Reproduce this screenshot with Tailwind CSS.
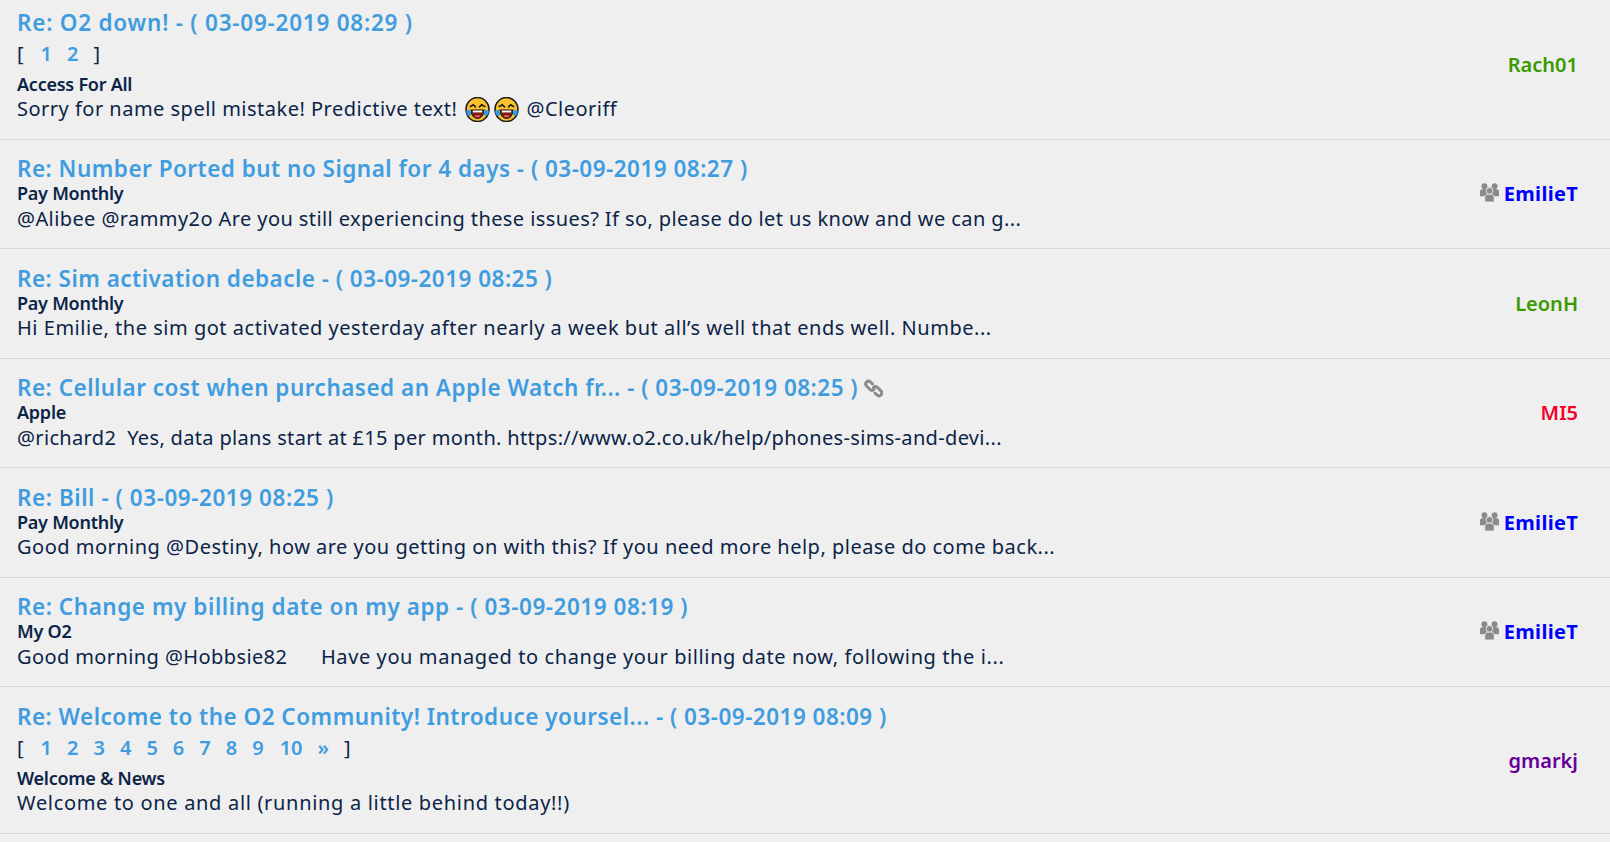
<!DOCTYPE html>
<html lang="en">
<head>
  <meta charset="UTF-8" />
  <title>Recent posts</title>
  <script src="https://cdn.jsdelivr.net/npm/@tailwindcss/browser@4"></script>
</head>
<body class="bg-[#efefef] font-['Noto_Sans',sans-serif] text-[#0b2447] overflow-hidden">
  <svg class="hidden">
    <defs>
      <symbol id="users" viewBox="0 0 18 18">
        <circle cx="4.200" cy="3" r="2.800" fill="#8a8a8a"/><circle cx="13.800" cy="3" r="2.800" fill="#8a8a8a"/>
        <path d="M0 12.500V8c0-1.500 1.500-2.200 4.200-2.200S8.500 6.500 8.500 8v4.500ZM9.500 12.500V8c0-1.500 1.600-2.200 4.300-2.200S18 6.500 18 8v4.500Z" fill="#8a8a8a"/>
        <circle cx="9" cy="7.500" r="3.200" fill="#8a8a8a" stroke="#efefef" stroke-width=".8"/>
        <path d="M4.500 18v-4.500c0-2 2-3 4.500-3s4.500 1 4.500 3V18Z" fill="#8a8a8a" stroke="#efefef" stroke-width=".8"/>
      </symbol>
      <symbol id="emoji" viewBox="0 0 24 24">
        <ellipse cx="12" cy="12" rx="11" ry="11.500" fill="#fbc02d" stroke="#1a1a1a" stroke-width="1.500"/>
        <path d="M4.500 9.500 8 7.500l2.500 2.500M13.500 10 16 7.500l3.500 2" fill="none" stroke="#1a1a1a" stroke-width="1.500"/>
        <path d="M6 12.500h12c0 5-2.500 8-6 8s-6-3-6-8Z" fill="#7a1f10" stroke="#1a1a1a"/>
        <path d="M7.500 13h9v1.800h-9Z" fill="#fff"/>
        <path d="M9 18.500c1.500-1.500 4.500-1.500 6 0-1.500 1.500-4.500 1.500-6 0Z" fill="#ef5350"/>
        <path d="M1 13.500 5 12l1 5c-1 2-4.500 1.500-5-3.500ZM23 13.500 19 12l-1 5c1 2 4.500 1.500 5-3.500Z" fill="#2f9be8"/>
      </symbol>
    </defs>
  </svg>

  <div class="flex h-[140px] items-center justify-between border-b border-[#d8d8d8] pb-[9px] pl-[17px] pr-[32px]">
    <div>
      <a class="block h-[27px] text-[22.500px] leading-[27px] font-semibold text-[#3f9ddf] tracking-[0.77px]">Re: O2 down! - ( 03-09-2019 08:29 )</a>
      <div class="flex h-[35px] items-center text-[20px]"><span>[</span><a class="ml-[17px] font-semibold text-[#3f9ddf]">1</a><a class="ml-[15px] font-semibold text-[#3f9ddf]">2</a><span class="ml-[15px]">]</span></div>
      <div class="mt-[1px] h-[25px] text-[18px] leading-[24px] font-semibold tracking-[-0.25px]">Access For All</div>
      <p class="flex h-[24px] items-center text-[20px] leading-[26px] tracking-[0.49px]">Sorry for name spell mistake! Predictive text!<svg class="ml-[8px] h-[25px] w-[25px]"><use href="#emoji"/></svg><svg class="ml-[4px] h-[25px] w-[25px]"><use href="#emoji"/></svg><span class="ml-[7px]">@Cleoriff</span></p>
    </div>
    <a class="text-[20px] font-semibold text-[#3a9a00]">Rach01</a>
  </div>

  <div class="flex h-[109px] items-center justify-between border-b border-[#d8d8d8] pl-[17px] pr-[32px]">
    <div class="mb-[2px]">
      <a class="block h-[27px] text-[22.500px] leading-[30px] font-semibold text-[#3f9ddf] tracking-[0.48px]">Re: Number Ported but no Signal for 4 days - ( 03-09-2019 08:27 )</a>
      <div class="h-[25px] text-[18px] leading-[24px] font-semibold tracking-[-0.25px]">Pay Monthly</div>
      <p class="h-[26px] text-[20px] leading-[26px] tracking-[0.41px]">@Alibee @rammy2o Are you still experiencing these issues? If so, please do let us know and we can g...</p>
    </div>
    <div class="flex items-center gap-[5px]"><svg class="mb-[3px] h-[19px] w-[19px]"><use href="#users"/></svg><a class="text-[20px] font-bold text-[#0000ff] tracking-[0.3px]">EmilieT</a></div>
  </div>

  <div class="flex h-[110px] items-center justify-between border-b border-[#d8d8d8] pl-[17px] pr-[32px]">
    <div class="mb-[2px]">
      <a class="block h-[27px] text-[22.500px] leading-[29px] font-semibold text-[#3f9ddf] tracking-[0.47px]">Re: Sim activation debacle - ( 03-09-2019 08:25 )</a>
      <div class="h-[25px] text-[18px] leading-[24px] font-semibold tracking-[-0.25px]">Pay Monthly</div>
      <p class="h-[26px] text-[20px] leading-[24px] tracking-[0.52px]">Hi Emilie, the sim got activated yesterday after nearly a week but all’s well that ends well. Numbe...</p>
    </div>
    <a class="text-[20px] font-semibold text-[#3a9a00]">LeonH</a>
  </div>

  <div class="flex h-[109px] items-center justify-between border-b border-[#d8d8d8] pl-[17px] pr-[32px]">
    <div class="mb-[2px]">
      <div class="flex h-[27px] items-start gap-[6px]"><a class="text-[22.500px] leading-[30px] font-semibold text-[#3f9ddf] tracking-[0.49px]">Re: Cellular cost when purchased an Apple Watch fr... - ( 03-09-2019 08:25 )</a>
        <svg class="mt-[6px] h-[19px] w-[19px]" viewBox="0 0 19 19" fill="none" stroke="#8a8a8a" stroke-width="3" stroke-linecap="round"><path d="M8.500 5 6.500 3a3 3 0 0 0-4 0 3 3 0 0 0 0 4l3.500 3.500a3 3 0 0 0 4 0"/><path d="M9.500 8.500a3 3 0 0 1 4 0l3.500 3.500a3 3 0 0 1 0 4 3 3 0 0 1-4 0l-2-2"/></svg>
      </div>
      <div class="h-[25px] text-[18px] leading-[24px] font-semibold tracking-[-0.25px]">Apple</div>
      <p class="h-[26px] whitespace-pre text-[20px] leading-[26px] tracking-[0.33px]">@richard2  Yes, data plans start at £15 per month. https://www.o2.co.uk/help/phones-sims-and-devi...</p>
    </div>
    <a class="text-[20px] font-semibold text-[#f5002d]">MI5</a>
  </div>

  <div class="flex h-[110px] items-center justify-between border-b border-[#d8d8d8] pl-[17px] pr-[32px]">
    <div class="mb-[2px]">
      <a class="block h-[27px] text-[22.500px] leading-[29px] font-semibold text-[#3f9ddf] tracking-[0.55px]">Re: Bill - ( 03-09-2019 08:25 )</a>
      <div class="h-[25px] text-[18px] leading-[24px] font-semibold tracking-[-0.25px]">Pay Monthly</div>
      <p class="h-[26px] text-[20px] leading-[24px] tracking-[0.49px]">Good morning @Destiny, how are you getting on with this? If you need more help, please do come back...</p>
    </div>
    <div class="flex items-center gap-[5px]"><svg class="mb-[3px] h-[19px] w-[19px]"><use href="#users"/></svg><a class="text-[20px] font-bold text-[#0000ff] tracking-[0.3px]">EmilieT</a></div>
  </div>

  <div class="flex h-[109px] items-center justify-between border-b border-[#d8d8d8] pl-[17px] pr-[32px]">
    <div class="mb-[2px]">
      <a class="block h-[27px] text-[22.500px] leading-[30px] font-semibold text-[#3f9ddf] tracking-[0.54px]">Re: Change my billing date on my app - ( 03-09-2019 08:19 )</a>
      <div class="h-[25px] text-[18px] leading-[24px] font-semibold tracking-[-0.25px]">My O2</div>
      <p class="h-[26px] whitespace-pre text-[20px] leading-[26px] tracking-[0.4px]">Good morning @Hobbsie82      <span class="tracking-[0.6px]">Have you managed to change your billing date now, following the i...</span></p>
    </div>
    <div class="flex items-center gap-[5px]"><svg class="mb-[3px] h-[19px] w-[19px]"><use href="#users"/></svg><a class="text-[20px] font-bold text-[#0000ff] tracking-[0.3px]">EmilieT</a></div>
  </div>

  <div class="flex h-[147px] items-center justify-between border-b border-[#d8d8d8] pl-[17px] pr-[32px]">
    <div>
      <a class="block h-[27px] text-[22.500px] leading-[27px] font-semibold text-[#3f9ddf] tracking-[0.48px]">Re: Welcome to the O2 Community! Introduce yoursel... - ( 03-09-2019 08:09 )</a>
      <div class="flex h-[35px] items-center text-[20px]"><span>[</span><a class="ml-[17px] font-semibold text-[#3f9ddf]">1</a><a class="ml-[15px] font-semibold text-[#3f9ddf]">2</a><a class="ml-[15px] font-semibold text-[#3f9ddf]">3</a><a class="ml-[15px] font-semibold text-[#3f9ddf]">4</a><a class="ml-[15px] font-semibold text-[#3f9ddf]">5</a><a class="ml-[15px] font-semibold text-[#3f9ddf]">6</a><a class="ml-[15px] font-semibold text-[#3f9ddf]">7</a><a class="ml-[15px] font-semibold text-[#3f9ddf]">8</a><a class="ml-[15px] font-semibold text-[#3f9ddf]">9</a><a class="ml-[16px] font-semibold text-[#3f9ddf]">10</a><a class="ml-[15px] font-semibold text-[#3f9ddf]">»</a><span class="ml-[15px]">]</span></div>
      <div class="mt-[1px] h-[25px] text-[18px] leading-[24px] font-semibold tracking-[-0.25px]">Welcome &amp; News</div>
      <p class="h-[26px] text-[20px] leading-[24px] tracking-[0.68px]">Welcome to one and all (running a little behind today!!)</p>
    </div>
    <a class="mt-[2px] text-[20px] font-semibold text-[#660099]">gmarkj</a>
  </div>
</body>
</html>
